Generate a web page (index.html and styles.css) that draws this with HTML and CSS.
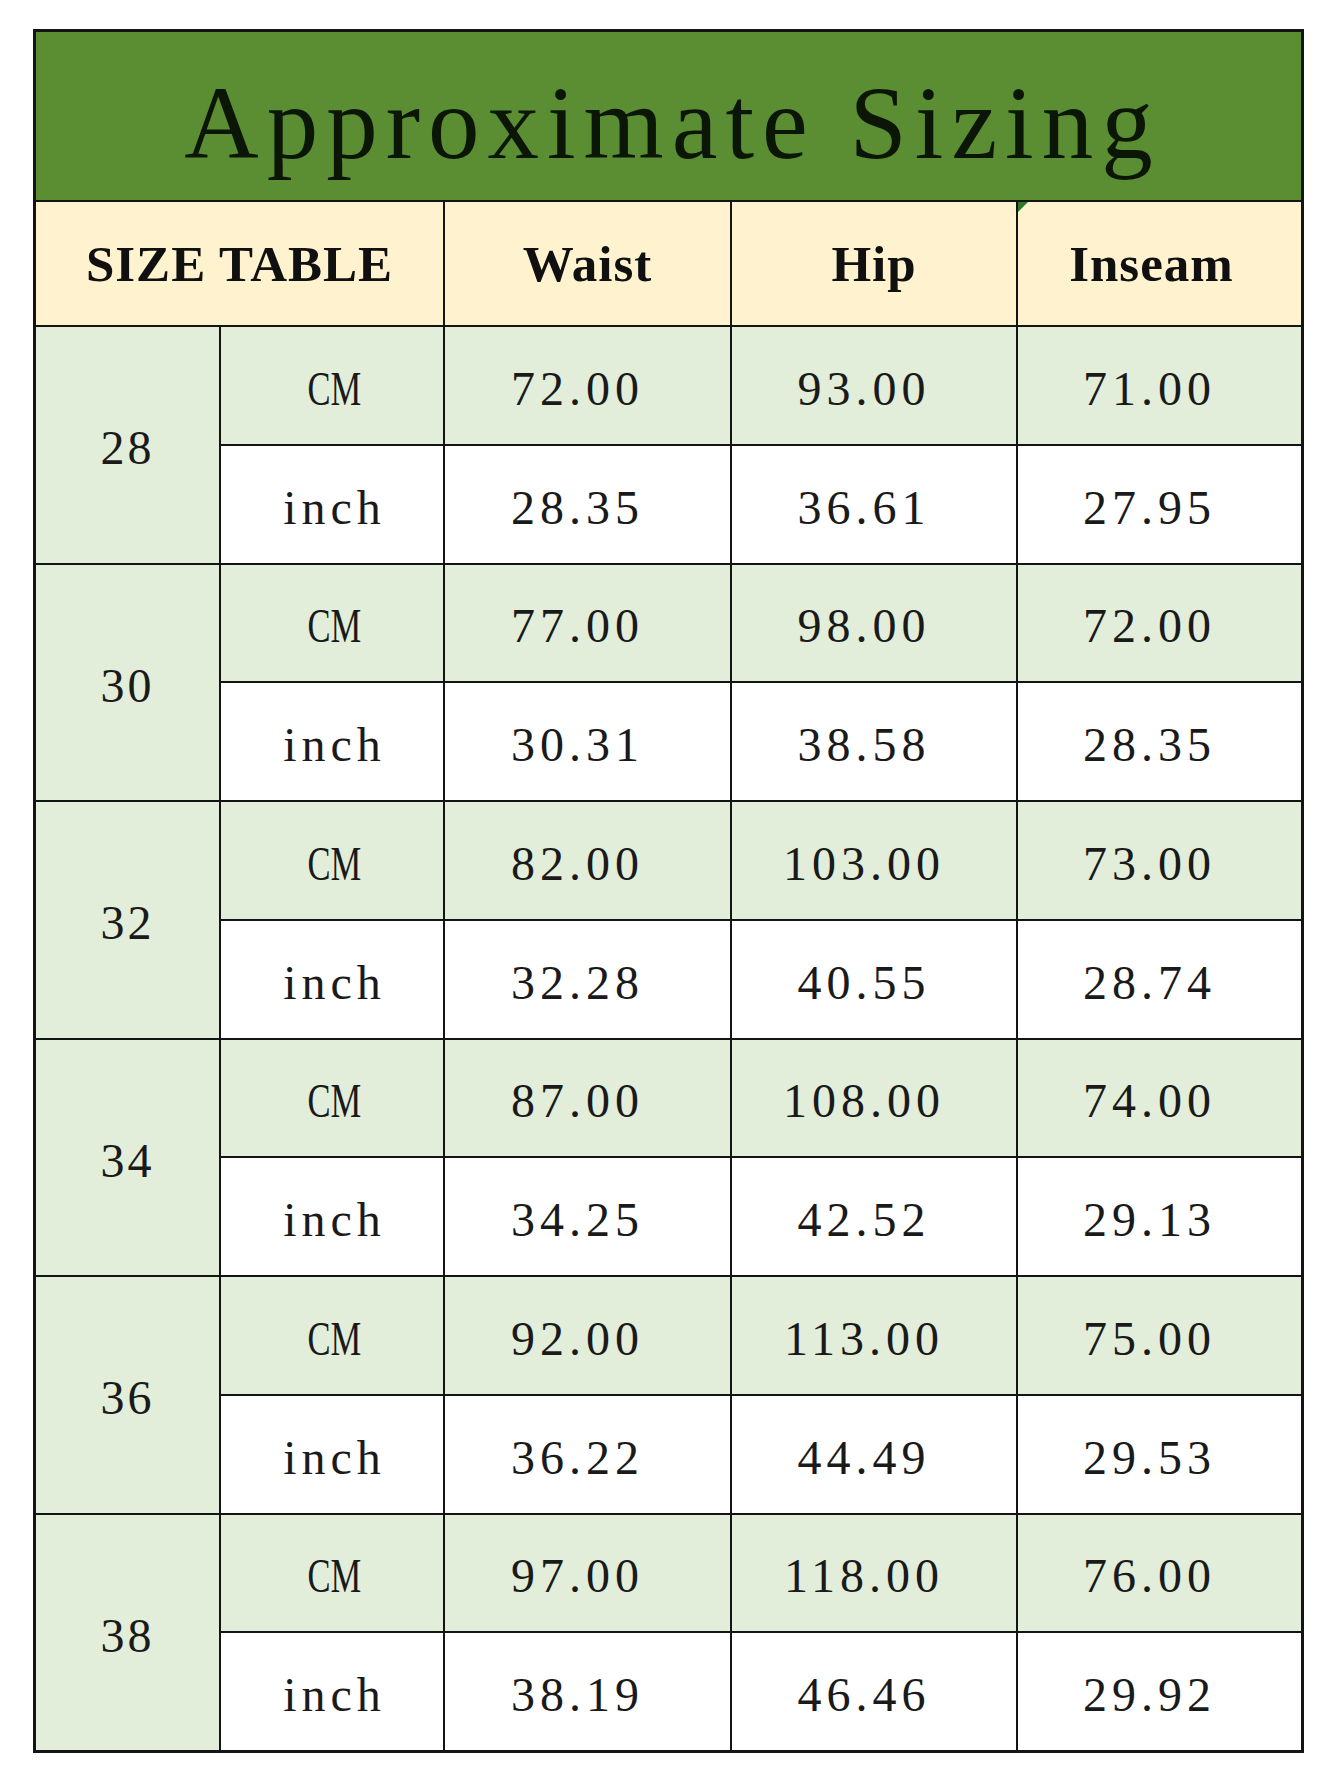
FILE: index.html
```html
<!DOCTYPE html>
<html lang="en">
<head>
<meta charset="utf-8">
<title>Approximate Sizing</title>
<link rel="stylesheet" href="styles.css">
</head>
<body>
<div class="sheet">
  <div class="title">Approximate Sizing</div>

  <div class="head head-size">SIZE TABLE</div>
  <div class="head">Waist</div>
  <div class="head">Hip</div>
  <div class="head head-mark">Inseam</div>

  <div class="size">28</div>
  <div class="unit cm"><span class="narrow">CM</span></div>
  <div class="val cm">72.00</div><div class="val cm">93.00</div><div class="val cm">71.00</div>
  <div class="unit in">inch</div>
  <div class="val in">28.35</div><div class="val in">36.61</div><div class="val in">27.95</div>

  <div class="size">30</div>
  <div class="unit cm"><span class="narrow">CM</span></div>
  <div class="val cm">77.00</div><div class="val cm">98.00</div><div class="val cm">72.00</div>
  <div class="unit in">inch</div>
  <div class="val in">30.31</div><div class="val in">38.58</div><div class="val in">28.35</div>

  <div class="size">32</div>
  <div class="unit cm"><span class="narrow">CM</span></div>
  <div class="val cm">82.00</div><div class="val cm">103.00</div><div class="val cm">73.00</div>
  <div class="unit in">inch</div>
  <div class="val in">32.28</div><div class="val in">40.55</div><div class="val in">28.74</div>

  <div class="size">34</div>
  <div class="unit cm"><span class="narrow">CM</span></div>
  <div class="val cm">87.00</div><div class="val cm">108.00</div><div class="val cm">74.00</div>
  <div class="unit in">inch</div>
  <div class="val in">34.25</div><div class="val in">42.52</div><div class="val in">29.13</div>

  <div class="size">36</div>
  <div class="unit cm"><span class="narrow">CM</span></div>
  <div class="val cm">92.00</div><div class="val cm">113.00</div><div class="val cm">75.00</div>
  <div class="unit in">inch</div>
  <div class="val in">36.22</div><div class="val in">44.49</div><div class="val in">29.53</div>

  <div class="size">38</div>
  <div class="unit cm"><span class="narrow">CM</span></div>
  <div class="val cm">97.00</div><div class="val cm">118.00</div><div class="val cm">76.00</div>
  <div class="unit in">inch</div>
  <div class="val in">38.19</div><div class="val in">46.46</div><div class="val in">29.92</div>
</div>
</body>
</html>
```

FILE: styles.css
```css
html, body {
  margin: 0;
  padding: 0;
  background: #ffffff;
}

body {
  font-family: "Liberation Serif", "Times New Roman", serif;
  color: #1a1a1a;
}

.sheet {
  margin: 29px 0 0 33px;
  width: 1271px;
  height: 1724px;
  box-sizing: border-box;
  border: 3px solid #141414;
  background: #141414;
  display: grid;
  grid-template-columns: 183px 222px 285px 284px 1fr;
  grid-template-rows: 168px 123px repeat(12, 1fr);
  gap: 2px;
}

.sheet > div {
  display: flex;
  align-items: center;
  justify-content: center;
}

.title {
  grid-column: 1 / -1;
  background: #5b8d33;
  color: #0b1607;
  font-size: 103px;
  letter-spacing: 8px;
  padding: 14px 0 0 8px;
}

.head {
  background: #fff2cf;
  color: #101010;
  font-size: 51px;
  font-weight: bold;
  letter-spacing: 1px;
}

.head-size {
  grid-column: span 2;
}

.head-mark {
  position: relative;
  padding-right: 16px;
}

.head-mark::before {
  content: "";
  position: absolute;
  top: 0;
  left: 0;
  border-top: 10px solid #2b7a22;
  border-right: 10px solid transparent;
}

.size {
  grid-row: span 2;
  background: #e2eed9;
  font-size: 48px;
  letter-spacing: 3px;
  padding-top: 6px;
}

.unit,
.val {
  font-size: 48px;
  padding-top: 6px;
}

.cm {
  background: #e2eed9;
}

.in {
  background: #ffffff;
}

.unit {
  letter-spacing: 5px;
  padding-left: 5px;
}

.narrow {
  display: inline-block;
  letter-spacing: 0;
  transform: scaleX(0.72);
}

.val {
  letter-spacing: 5px;
  padding-right: 20px;
}
```
